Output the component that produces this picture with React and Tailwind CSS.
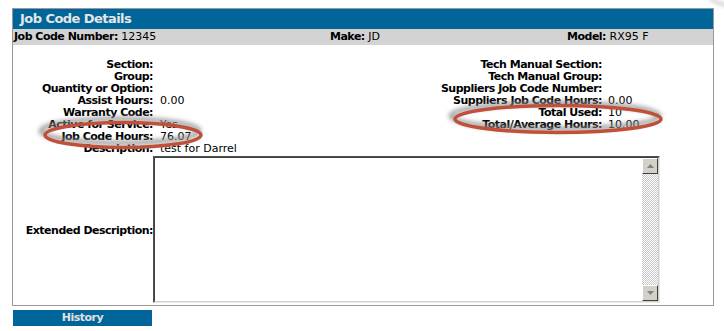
import React from "react";

const leftRows = [
  ["Section:", ""],
  ["Group:", ""],
  ["Quantity or Option:", ""],
  ["Assist Hours:", "0.00"],
  ["Warranty Code:", ""],
  ["Active for Service:", "Yes"],
  ["Job Code Hours:", "76.07"],
  ["Description:", "test for Darrel"],
];

const rightRows = [
  ["Tech Manual Section:", ""],
  ["Tech Manual Group:", ""],
  ["Suppliers Job Code Number:", ""],
  ["Suppliers Job Code Hours:", "0.00"],
  ["Total Used:", "10"],
  ["Total/Average Hours:", "10.00"],
];

function ScrollButton({ up }) {
  return (
    <div className="w-[16px] h-[16px] bg-[#d4d0c8] border-t border-l border-t-white border-l-white border-b border-r border-b-[#404040] border-r-[#404040] flex items-center justify-center">
      <svg width="7" height="4" viewBox="0 0 7 4">
        {up ? (
          <polygon points="3.5,0 7,4 0,4" fill="#808080" />
        ) : (
          <polygon points="0,0 7,0 3.5,4" fill="#808080" />
        )}
      </svg>
    </div>
  );
}

export default function App() {
  return (
    <div className="relative w-[724px] h-[331px] overflow-hidden bg-white font-['DejaVu_Sans','Verdana',sans-serif] text-[11px] text-black">
      <div className="pt-2 pl-3">
        <div className="w-[702px] border border-[#999999]">
          <div className="h-[20px] bg-[#006699] pl-[7px] text-[13px] font-bold leading-[20px] tracking-[-0.55px] text-[#e6e6e6]">
            Job Code Details
          </div>
          <div className="grid h-[16px] grid-cols-[316px_237px_1fr] bg-[#d3d3d3] pl-px leading-[16px]">
            <div>
              <span className="font-bold tracking-[-0.5px]">Job Code Number:</span> 12345
            </div>
            <div>
              <span className="font-bold tracking-[-0.5px]">Make:</span> JD
            </div>
            <div>
              <span className="font-bold tracking-[-0.5px]">Model:</span> RX95 F
            </div>
          </div>
          <div className="pt-[14px] pb-[2px]">
            <div className="flex">
              <div className="grid w-[389px] grid-cols-[140px_1fr] gap-x-[7px] leading-[12px]">
                {leftRows.map(([l, v]) => (
                  <React.Fragment key={l}>
                    <div className="text-right font-bold tracking-[-0.5px] whitespace-nowrap">{l}</div>
                    <div className="whitespace-nowrap">{v}</div>
                  </React.Fragment>
                ))}
              </div>
              <div className="grid h-fit grid-cols-[200px_1fr] gap-x-[6px] leading-[12px]">
                {rightRows.map(([l, v]) => (
                  <React.Fragment key={l}>
                    <div className="text-right font-bold tracking-[-0.5px] whitespace-nowrap">{l}</div>
                    <div className="whitespace-nowrap">{v}</div>
                  </React.Fragment>
                ))}
              </div>
            </div>
            <div className="mt-px flex items-center">
              <div className="w-[140px] pt-[3px] text-right font-bold tracking-[-0.5px] whitespace-nowrap">Extended Description:</div>
              <div className="flex h-[147px] w-[507px] border-t border-l border-t-[#505050] border-l-[#505050] border-b border-r border-b-[#e8e8e8] border-r-[#e8e8e8]">
                <div className="flex flex-1 border-t border-l border-t-[#404040] border-l-[#404040] border-b border-r border-b-[#d4d0c8] border-r-[#d4d0c8]">
                  <div className="flex-1 bg-white" />
                  <div className="flex w-[16px] flex-col bg-[image:repeating-conic-gradient(#c8c8c8_0_25%,#ffffff_0_50%)] bg-size-[2px_2px]">
                    <ScrollButton up />
                    <div className="flex-1" />
                    <ScrollButton />
                  </div>
                </div>
              </div>
            </div>
          </div>
        </div>
        <div className="mt-[4px] ml-px h-[16px] w-[139px] bg-[#006699] text-center font-bold leading-[16px] tracking-[-0.5px] text-[#e0e0e0]">
          History
        </div>
      </div>

      <svg className="pointer-events-none absolute inset-0" width="724" height="331">
        <defs>
          <filter id="blur" x="-20%" y="-50%" width="140%" height="200%">
            <feGaussianBlur stdDeviation="2" />
          </filter>
        </defs>
        <ellipse cx="120" cy="131" rx="79" ry="12" fill="none" stroke="#8a8a8a" strokeWidth="5" opacity="0.75" filter="url(#blur)" />
        <ellipse cx="123" cy="135" rx="78" ry="12.5" fill="none" stroke="#c0503a" strokeWidth="3.5" />
        <ellipse cx="555" cy="116" rx="104" ry="13" fill="none" stroke="#8a8a8a" strokeWidth="5" opacity="0.75" filter="url(#blur)" />
        <ellipse cx="558" cy="119" rx="103" ry="13.5" fill="none" stroke="#c0503a" strokeWidth="3.5" />
        <ellipse cx="730" cy="-8" rx="22" ry="13" fill="none" stroke="#b0b0b0" strokeWidth="2" filter="url(#blur)" />
      </svg>
    </div>
  );
}
